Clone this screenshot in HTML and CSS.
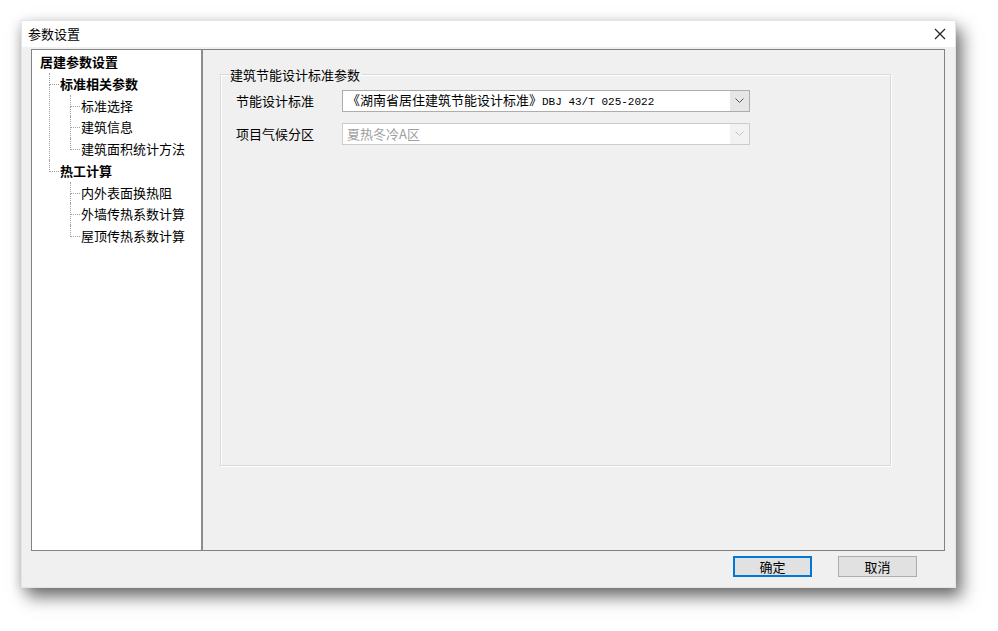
FILE: index.html
```html
<!DOCTYPE html>
<html lang="zh-CN">
<head>
  <meta charset="UTF-8">
  <title>参数设置</title>
  <link rel="stylesheet" href="styles.css">
</head>
<body>

  <div class="window">
    <div class="titlebar">
      <span class="title">参数设置</span>
      <svg class="close" width="12" height="12" viewBox="0 0 12 12">
        <path d="M1 1 L11 11 M11 1 L1 11" stroke="#222" stroke-width="1.2" fill="none"/>
      </svg>
    </div>

    <div class="body">
      <div class="frame">
        <div class="tree">
          <ul class="tree-root">
            <li>
              <span class="node bold">居建参数设置</span>
              <ul class="level1">
                <li>
                  <span class="node bold">标准相关参数</span>
                  <ul class="level2">
                    <li><span class="node">标准选择</span></li>
                    <li><span class="node">建筑信息</span></li>
                    <li><span class="node">建筑面积统计方法</span></li>
                  </ul>
                </li>
                <li>
                  <span class="node bold">热工计算</span>
                  <ul class="level2">
                    <li><span class="node">内外表面换热阻</span></li>
                    <li><span class="node">外墙传热系数计算</span></li>
                    <li><span class="node">屋顶传热系数计算</span></li>
                  </ul>
                </li>
              </ul>
            </li>
          </ul>
        </div>

        <div class="panel">
          <fieldset class="group">
            <legend>建筑节能设计标准参数</legend>
            <div class="row">
              <label class="label">节能设计标准</label>
              <div class="combo">
                <span class="combo-text">《湖南省居住建筑节能设计标准》<span class="code">DBJ 43/T 025-2022</span></span>
                <span class="combo-arrow">
                  <svg width="9" height="6" viewBox="0 0 9 6"><path d="M0.5 0.5 L4.5 4.5 L8.5 0.5" stroke="#555" fill="none"/></svg>
                </span>
              </div>
            </div>
            <div class="row">
              <label class="label">项目气候分区</label>
              <div class="combo disabled">
                <span class="combo-text">夏热冬冷A区</span>
                <span class="combo-arrow">
                  <svg width="9" height="6" viewBox="0 0 9 6"><path d="M0.5 0.5 L4.5 4.5 L8.5 0.5" stroke="#c2c2c2" fill="none"/></svg>
                </span>
              </div>
            </div>
          </fieldset>
        </div>
      </div>

      <div class="footer">
        <button class="btn default">确定</button>
        <button class="btn">取消</button>
      </div>
    </div>
  </div>

</body>
</html>
```

FILE: styles.css
```css
* {
  box-sizing: border-box;
}

html,
body {
  min-height: 100vh;
}

body {
  margin: 0;
  padding: 20px 0 0 21px;
  background: #fff;
  font-family: "Noto Sans CJK SC", "Microsoft YaHei", sans-serif;
  font-size: 13px;
  color: #000;
}

.window {
  width: 935px;
  height: 568px;
  background: #f0f0f0;
  border: 1px solid #e4e4e4;
  box-shadow: 6px 9px 16px rgba(0, 0, 0, 0.55), -2px 2px 10px rgba(0, 0, 0, 0.12);
  display: flex;
  flex-direction: column;
}

.titlebar {
  height: 26px;
  background: #fff;
  display: flex;
  align-items: center;
  justify-content: space-between;
  padding: 0 9px 0 6px;
  line-height: 20px;
}

.close {
  display: block;
}

.body {
  flex: 1;
  padding: 2px 10px 0 9px;
  display: flex;
  flex-direction: column;
}

.frame {
  height: 502px;
  border: 1px solid #828282;
  display: flex;
}

/* tree */
.tree {
  width: 171px;
  background: #fff;
  border-right: 2px solid #8c8c8c;
  padding: 1px 0 0 8px;
}

.tree ul {
  list-style: none;
  margin: 0;
  padding: 0;
}

.tree li {
  position: relative;
}

.node {
  display: block;
  line-height: 21.75px;
  height: 21.75px;
  white-space: nowrap;
}

.bold {
  font-weight: bold;
}

.level1 {
  padding-left: 20px !important;
}

.level2 {
  padding-left: 21px !important;
}

.level1 > li::before,
.level2 > li::before {
  content: '';
  position: absolute;
  left: -11px;
  top: 0;
  width: 9px;
  height: 11px;
  border-left: 1px dotted #a0a0a0;
  border-bottom: 1px dotted #a0a0a0;
}

.level1 > li:not(:last-child)::after,
.level2 > li:not(:last-child)::after {
  content: '';
  position: absolute;
  left: -11px;
  top: 11px;
  bottom: 0;
  border-left: 1px dotted #a0a0a0;
}

/* right panel */
.panel {
  flex: 1;
  background: #f0f0f0;
  padding: 16px 0 0 17px;
}

.group {
  width: 671px;
  height: 400px;
  margin: 0;
  padding: 7px 0 0 15px;
  border: 1px solid #d9d9d9;
  box-shadow: inset 1px 1px 0 #fff, 1px 1px 0 #fff;
}

.group legend {
  margin-left: -6px;
  padding: 0 2px 0 0;
  line-height: 17px;
}

.row {
  display: flex;
  align-items: center;
  height: 22px;
  margin-bottom: 11px;
}

.label {
  width: 106px;
  line-height: 20px;
}

.combo {
  width: 408px;
  height: 22px;
  border: 1px solid #adadad;
  background: #fff;
  display: flex;
  align-items: center;
}

.combo-text {
  flex: 1;
  padding-left: 4px;
  line-height: 20px;
  white-space: nowrap;
}

.code {
  font-family: "Liberation Mono", "DejaVu Sans Mono", monospace;
  font-size: 11px;
}

.combo-arrow {
  width: 19px;
  height: 20px;
  background: #e6e6e6;
  display: flex;
  align-items: center;
  justify-content: center;
}

.combo.disabled {
  border-color: #cccccc;
}

.combo.disabled .combo-text {
  color: #a0a0a0;
}

.combo.disabled .combo-arrow {
  background: #f2f2f2;
}

/* footer */
.footer {
  display: flex;
  justify-content: flex-end;
  gap: 26px;
  padding: 5px 28px 0 0;
}

.btn {
  width: 79px;
  height: 21px;
  padding: 0;
  font-family: inherit;
  font-size: 13px;
  line-height: 17px;
  background: #e1e1e1;
  border: 1px solid #adadad;
  color: #000;
}

.btn.default {
  border: 2px solid #0078d7;
}
```
